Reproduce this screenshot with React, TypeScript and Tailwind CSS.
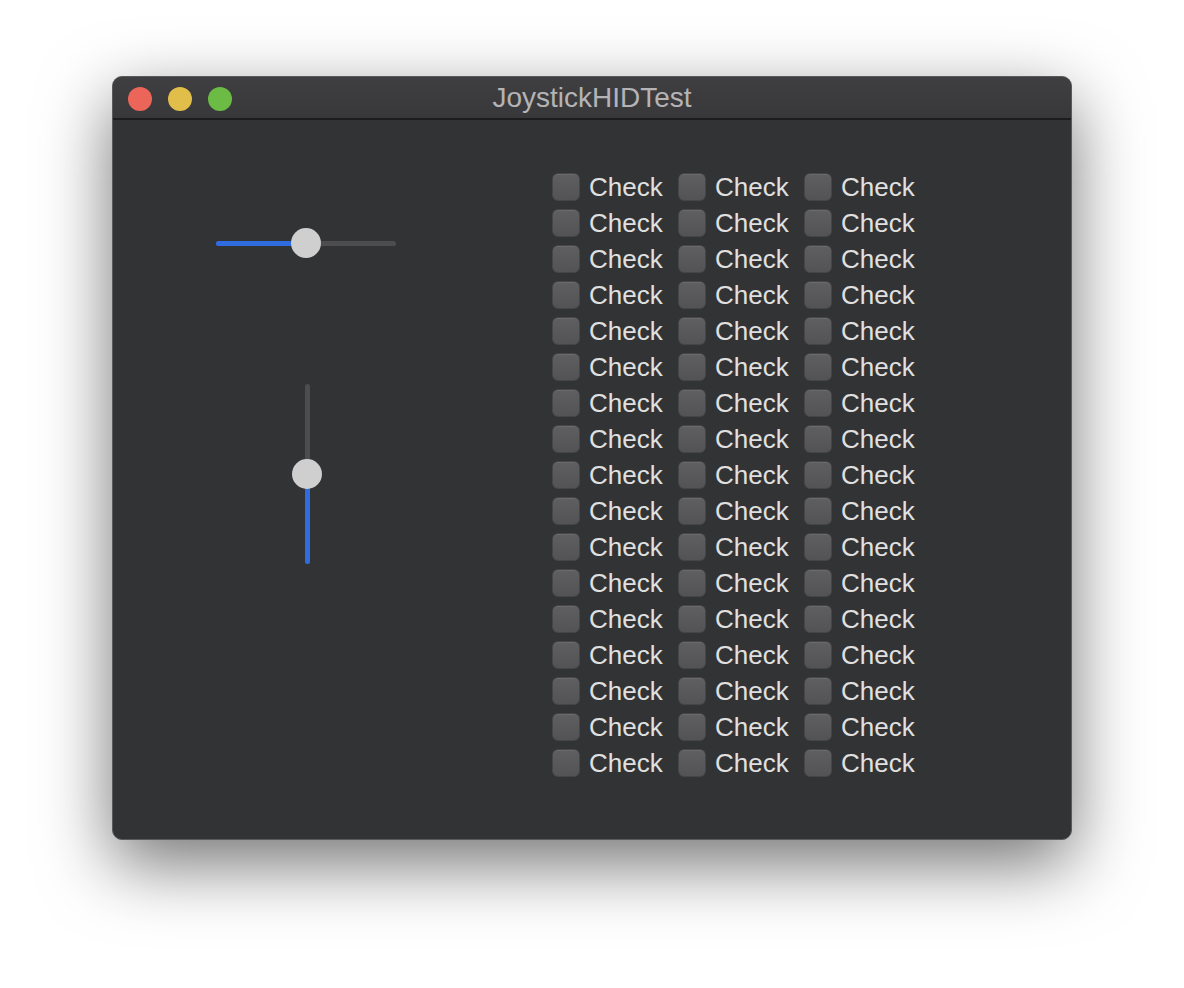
import React from "react";

const rows = Array.from({ length: 17 });
const cols = [0, 1, 2];

function Box() {
  return (
    <div className="w-[28px] h-[28px] rounded-[6px] bg-gradient-to-b from-[#5f5f61] to-[#535355] border border-[#464648] shadow-[inset_0_1px_0_rgba(255,255,255,0.08)] shrink-0" />
  );
}

export default function App() {
  return (
    <div className="w-[1184px] h-[988px] bg-white pt-[76px] pl-[112px]" style={{ fontFamily: '"Liberation Sans", Arial, sans-serif' }}>
      <div className="w-[960px] h-[764px] rounded-[10px] border border-[#5a5a5c] bg-[#323335] overflow-hidden shadow-[0_24px_70px_rgba(0,0,0,0.55)] flex flex-col">
        <div className="h-[43px] shrink-0 bg-gradient-to-b from-[#3f3f41] to-[#38383a] border-b-[2px] border-[#1c1c1d] relative flex items-center justify-center">
          <div className="absolute left-[15px] top-[10px] flex gap-[16px]">
            <div className="w-[24px] h-[24px] rounded-full bg-[#ec6559]" />
            <div className="w-[24px] h-[24px] rounded-full bg-[#e1be4a]" />
            <div className="w-[24px] h-[24px] rounded-full bg-[#6cbb45]" />
          </div>
          <span className="text-[28px] text-[#b4b4b6] leading-none">JoystickHIDTest</span>
        </div>
        <div className="flex flex-1">
          <div className="w-[439px] shrink-0 flex flex-col">
            <div className="ml-[88px] mt-[108px] w-[210px] h-[30px] relative flex items-center">
              <div className="absolute left-[15px] right-[15px] h-[5px] rounded-full bg-[#4d4d4f]" />
              <div className="absolute left-[15px] w-[90px] h-[5px] rounded-full bg-[#2e6ce0]" />
              <div className="absolute left-[90px] w-[30px] h-[30px] rounded-full bg-[#cfcfd0]" />
            </div>
            <div className="ml-[179px] mt-[111px] w-[30px] h-[210px] relative flex justify-center">
              <div className="absolute top-[15px] bottom-[15px] w-[5px] rounded-full bg-[#4d4d4f]" />
              <div className="absolute bottom-[15px] h-[90px] w-[5px] rounded-full bg-[#2e6ce0]" />
              <div className="absolute top-[90px] w-[30px] h-[30px] rounded-full bg-[#cfcfd0]" />
            </div>
          </div>
          <div className="mt-[49px] flex flex-col">
            {rows.map((_, r) => (
              <div key={r} className="flex h-[36px] items-center">
                {cols.map((c) => (
                  <div key={c} className="w-[126px] flex items-center gap-[9px]">
                    <Box />
                    <span className="text-[26px] text-[#e0e0e0] leading-none">Check</span>
                  </div>
                ))}
              </div>
            ))}
          </div>
        </div>
      </div>
    </div>
  );
}
